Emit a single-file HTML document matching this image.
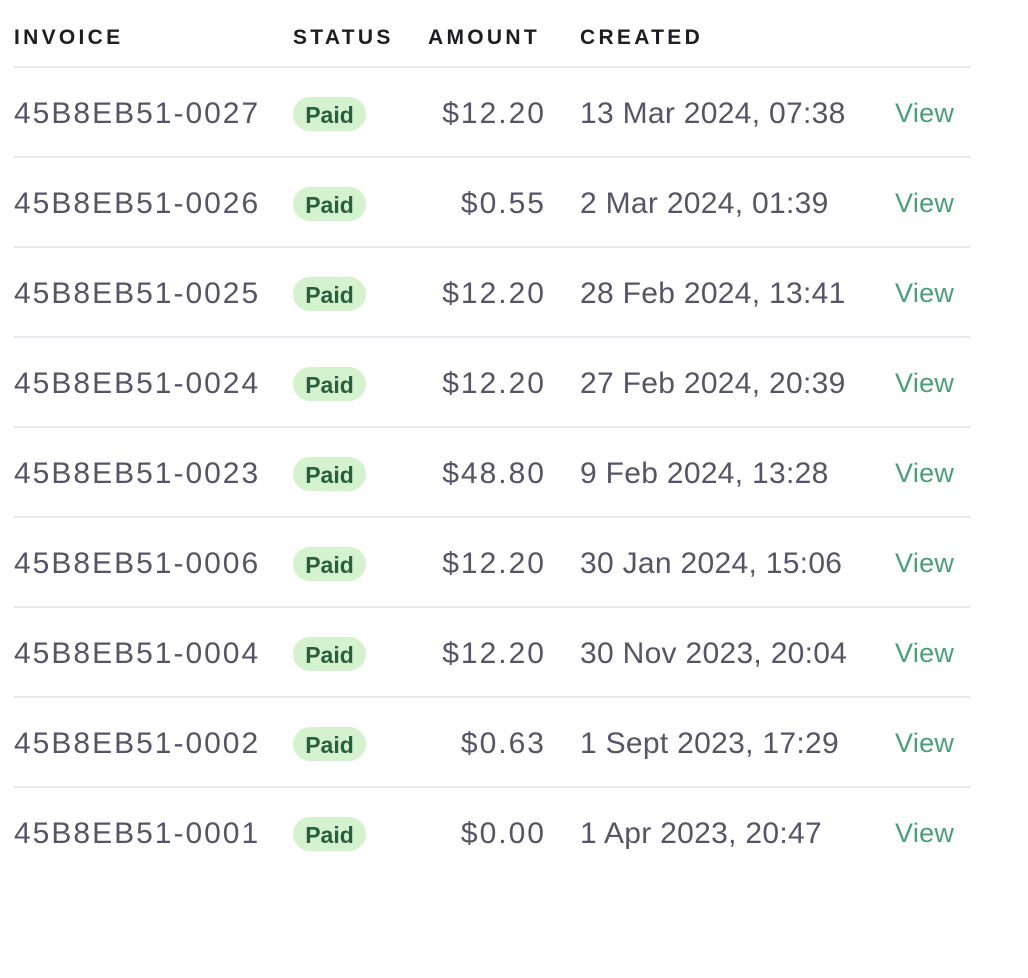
<!DOCTYPE html>
<html><head><style>
body{margin:0;background:#fff;font-family:"Liberation Sans",sans-serif;}
.wrap{position:absolute;left:14px;top:0;width:957px;}
.h{position:absolute;top:26px;font-size:21px;font-weight:bold;letter-spacing:3.3px;color:#1d1d22;}
.row{position:absolute;left:0;width:957px;height:90px;border-top:2px solid #e8e8ec;}
.c{position:absolute;top:29px;font-size:30px;letter-spacing:0.3px;color:#565466;white-space:nowrap;}
.inv{left:0;letter-spacing:2px;}
.badge{position:absolute;left:279px;top:29px;width:73px;height:34px;border-radius:17px;background:#d3f2cd;color:#2a5f3e;font-weight:bold;font-size:23px;text-align:center;line-height:36px;}
.amt{right:425px;text-align:right;letter-spacing:2px;}
.view{left:881px;color:#4a9e78;font-size:27px;top:30px;letter-spacing:0.3px;}
</style></head><body><div class="wrap">
<div class="h" style="left:0">INVOICE</div>
<div class="h" style="left:279px">STATUS</div>
<div class="h" style="left:414px">AMOUNT</div>
<div class="h" style="left:566px">CREATED</div>
<div class="row" style="top:66px"><div class="c inv">45B8EB51-0027</div><div class="badge">Paid</div><div class="c amt">$12.20</div><div class="c" style="left:566px">13 Mar 2024, 07:38</div><div class="c view">View</div></div>
<div class="row" style="top:156px"><div class="c inv">45B8EB51-0026</div><div class="badge">Paid</div><div class="c amt">$0.55</div><div class="c" style="left:566px">2 Mar 2024, 01:39</div><div class="c view">View</div></div>
<div class="row" style="top:246px"><div class="c inv">45B8EB51-0025</div><div class="badge">Paid</div><div class="c amt">$12.20</div><div class="c" style="left:566px">28 Feb 2024, 13:41</div><div class="c view">View</div></div>
<div class="row" style="top:336px"><div class="c inv">45B8EB51-0024</div><div class="badge">Paid</div><div class="c amt">$12.20</div><div class="c" style="left:566px">27 Feb 2024, 20:39</div><div class="c view">View</div></div>
<div class="row" style="top:426px"><div class="c inv">45B8EB51-0023</div><div class="badge">Paid</div><div class="c amt">$48.80</div><div class="c" style="left:566px">9 Feb 2024, 13:28</div><div class="c view">View</div></div>
<div class="row" style="top:516px"><div class="c inv">45B8EB51-0006</div><div class="badge">Paid</div><div class="c amt">$12.20</div><div class="c" style="left:566px">30 Jan 2024, 15:06</div><div class="c view">View</div></div>
<div class="row" style="top:606px"><div class="c inv">45B8EB51-0004</div><div class="badge">Paid</div><div class="c amt">$12.20</div><div class="c" style="left:566px">30 Nov 2023, 20:04</div><div class="c view">View</div></div>
<div class="row" style="top:696px"><div class="c inv">45B8EB51-0002</div><div class="badge">Paid</div><div class="c amt">$0.63</div><div class="c" style="left:566px">1 Sept 2023, 17:29</div><div class="c view">View</div></div>
<div class="row" style="top:786px"><div class="c inv">45B8EB51-0001</div><div class="badge">Paid</div><div class="c amt">$0.00</div><div class="c" style="left:566px">1 Apr 2023, 20:47</div><div class="c view">View</div></div>
</div></body></html>
